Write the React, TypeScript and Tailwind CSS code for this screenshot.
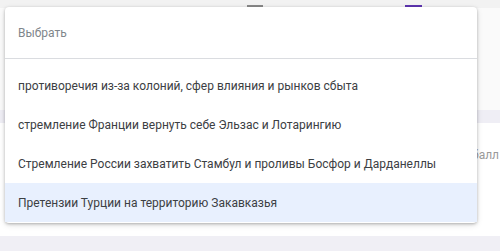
export default function App() {
  const items = [
    "противоречия из-за колоний, сфер влияния и рынков сбыта",
    "стремление Франции вернуть себе Эльзас и Лотарингию",
    "Стремление России захватить Стамбул и проливы Босфор и Дарданеллы",
    "Претензии Турции на территорию Закавказья",
  ];
  return (
    <div
      className="relative w-[500px] h-[251px] overflow-hidden bg-white"
      style={{ fontFamily: "Roboto, 'Liberation Sans', sans-serif" }}
    >
      {/* background page */}
      <div className="flex flex-col h-full">
        <div className="h-[8px] bg-[#f2f2f2] flex items-end">
          <div className="ml-[247px] w-[16px] h-[2px] bg-[#8a8a8a] mb-[1px]" />
          <div className="ml-[142px] w-[17px] h-[2px] bg-[#5e35b1] mb-[1px]" />
        </div>
        <div className="h-[102px] bg-[#fafafa]" />
        <div className="h-[13px] bg-[#efeef5]" />
        <div className="h-[113px] bg-white flex flex-col">
          <span className="mt-[24px] pl-[472px] text-[12px] leading-[16px] text-[#9a9a9a] whitespace-nowrap">
            балл
          </span>
        </div>
        <div className="flex-1 bg-[#f0eff5]" />
      </div>

      {/* dropdown overlay */}
      <div className="absolute left-[5px] top-[7px] w-[472px] bg-white rounded-[4px] shadow-[0_1px_3px_rgba(0,0,0,0.25),0_2px_6px_rgba(0,0,0,0.12)] flex flex-col">
        <div className="h-[52px] flex items-center pl-[13px] text-[12px] text-[#80868b] border-b border-[#dadce0]">
          Выбрать
        </div>
        <div className="pt-[7px] pb-[1px] flex flex-col">
          {items.map((t, i) => (
            <div
              key={i}
              className={
                "h-[39px] flex items-center pl-[13px] text-[12px] text-[#3c4043] " +
                (i === 3 ? "bg-[#e8f0fe]" : "")
              }
            >
              {t}
            </div>
          ))}
        </div>
      </div>
    </div>
  );
}
